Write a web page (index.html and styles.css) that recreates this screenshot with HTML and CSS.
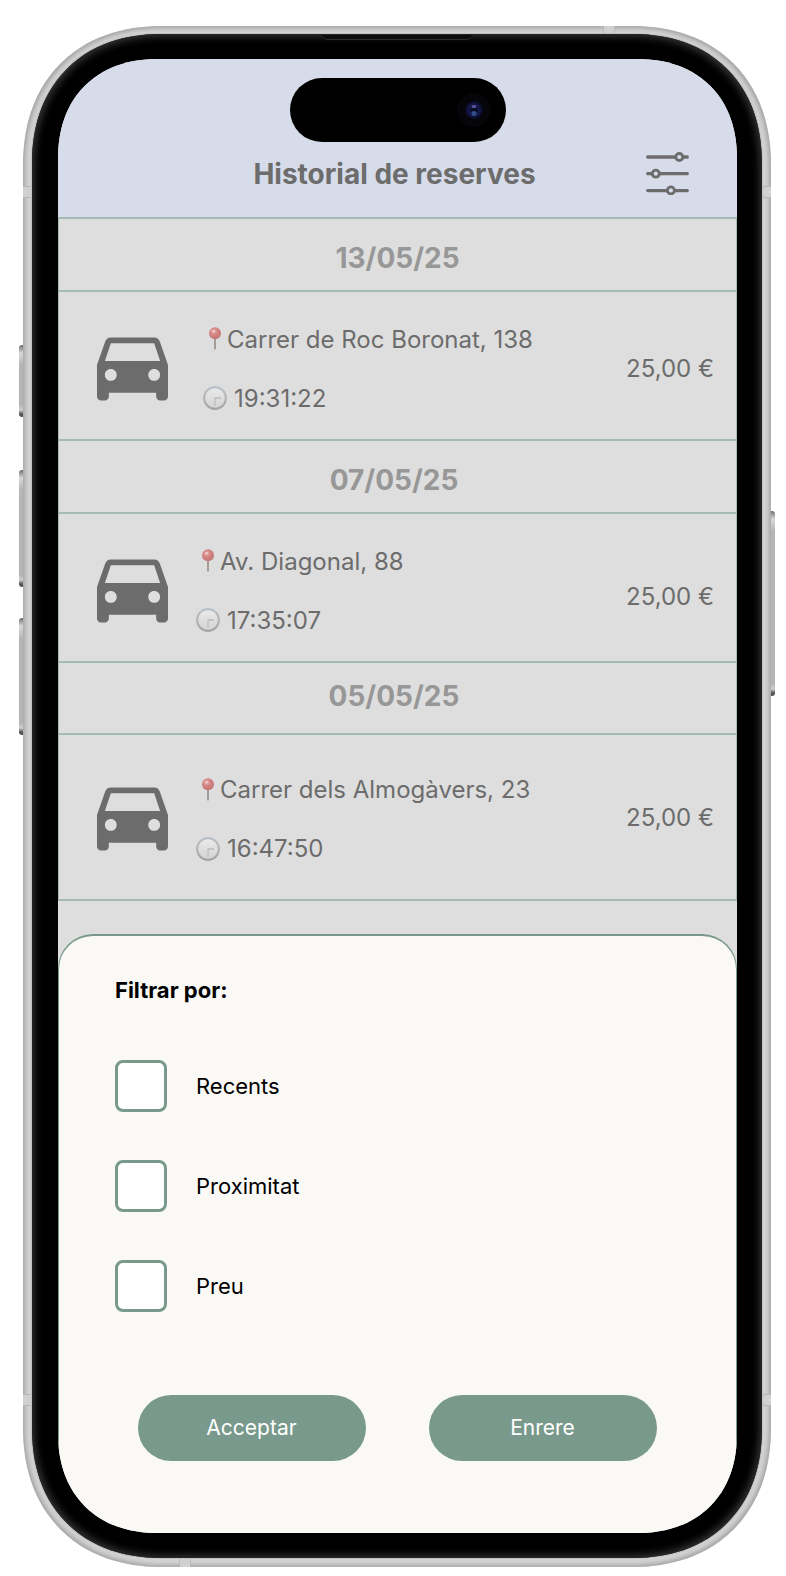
FILE: index.html
```html
<!DOCTYPE html>
<html lang="ca">
<head>
<meta charset="utf-8">
<meta name="viewport" content="width=device-width, initial-scale=1">
<title>Historial de reserves</title>
<link rel="stylesheet" href="styles.css">
</head>
<body>
<svg class="defs" aria-hidden="true">
  <defs>
    <radialGradient id="pin-head" cx="40%" cy="35%" r="65%">
      <stop offset="0" stop-color="#e3aaa8"/>
      <stop offset="0.5" stop-color="#d38482"/>
      <stop offset="1" stop-color="#c47674"/>
    </radialGradient>
    <linearGradient id="clock-rim" x1="0" y1="0" x2="0" y2="1">
      <stop offset="0" stop-color="#bcc3ca"/>
      <stop offset="0.5" stop-color="#b4b4b4"/>
      <stop offset="1" stop-color="#a2a2a2"/>
    </linearGradient>
    <linearGradient id="clock-face" x1="0" y1="0" x2="0" y2="1">
      <stop offset="0" stop-color="#e9e9e9"/>
      <stop offset="1" stop-color="#d4d4d4"/>
    </linearGradient>
    <symbol id="car" viewBox="3 5 18 16">
      <path d="M18.92 6.01C18.72 5.42 18.16 5 17.5 5h-11c-.66 0-1.21.42-1.42 1.01L3 12v8c0 .55.45 1 1 1h1c.55 0 1-.45 1-1v-1h12v1c0 .55.45 1 1 1h1c.55 0 1-.45 1-1v-8l-2.08-5.99zM6.5 16c-.83 0-1.5-.67-1.5-1.5S5.67 13 6.5 13s1.5.67 1.5 1.5S7.33 16 6.5 16zm11 0c-.83 0-1.5-.67-1.5-1.5s.67-1.5 1.5-1.5 1.5.67 1.5 1.5-.67 1.5-1.5 1.5zM5 11l1.5-4.5h11L19 11H5z" fill="currentColor"/>
    </symbol>
    <symbol id="pin" viewBox="0 0 24 24">
      <path d="M11 10h2v11.500l-1 1.500-1-1.500z" fill="#a39c97"/>
      <circle cx="12" cy="6.300" r="6" fill="url(#pin-head)"/>
      <ellipse cx="10.600" cy="4.300" rx="1.600" ry="1.200" fill="#ecc9c8"/>
    </symbol>
    <symbol id="clock" viewBox="0 0 24 24">
      <circle cx="12" cy="12" r="11.900" fill="url(#clock-rim)"/>
      <circle cx="12" cy="12" r="9.800" fill="url(#clock-face)"/>
      <path d="M12 19.500V12h6" fill="none" stroke="#bdbdbd" stroke-width="1.300"/>
    </symbol>
  </defs>
</svg>

<div class="phone">
  <span class="side side-action"></span>
  <span class="side side-up"></span>
  <span class="side side-down"></span>
  <span class="side side-power"></span>
  <span class="band band-tl"></span>
  <span class="band band-tr"></span>
  <span class="band band-bl"></span>
  <span class="band band-br"></span>
  <span class="band band-top"></span>
  <span class="band band-bottom"></span>
  <div class="bezel">
    <span class="speaker"></span>
    <div class="screen">
      <div class="island">
        <svg class="camera" viewBox="0 0 34 34" aria-hidden="true">
          <circle cx="17" cy="17" r="17" fill="#060509"/>
          <circle cx="17" cy="17" r="9" fill="#0c0d2b"/>
          <circle cx="17" cy="17" r="7" fill="#15174a"/>
          <ellipse cx="17" cy="17" rx="3.500" ry="6" fill="#0a0c24"/>
          <ellipse cx="17" cy="13.500" rx="2.600" ry="1.800" fill="#54509c"/>
          <ellipse cx="17" cy="20.500" rx="2.600" ry="2.400" fill="#2f4f8c"/>
        </svg>
      </div>

      <header class="header">
        <h1 class="title">Historial de reserves</h1>
        <button class="filter" type="button" aria-label="Filtrar">
          <svg viewBox="0 0 43 43" width="43" height="43" fill="none" stroke="currentColor" stroke-width="3.300" stroke-linecap="round" aria-hidden="true">
            <path d="M1.700 5H29.500M37.500 5h3.800M1.700 21.700h4M14 21.700h27.300M1.700 38.600H20.800M29 38.600h12.300"/>
            <circle cx="33.300" cy="5" r="3.500" stroke-width="2.800"/>
            <circle cx="9.800" cy="21.700" r="3.500" stroke-width="2.800"/>
            <circle cx="24.900" cy="38.400" r="3.500" stroke-width="2.800"/>
          </svg>
        </button>
      </header>

      <main class="history">
        <h2 class="day">13/05/25</h2>
        <article class="trip trip-latest">
          <svg class="car" aria-hidden="true"><use href="#car"/></svg>
          <div class="details">
            <p class="place"><svg class="mark" aria-hidden="true"><use href="#pin"/></svg>Carrer de Roc Boronat, 138</p>
            <p class="time"><svg class="mark" aria-hidden="true"><use href="#clock"/></svg>19:31:22</p>
          </div>
          <p class="price">25,00 €</p>
        </article>

        <h2 class="day day-past">07/05/25</h2>
        <article class="trip">
          <svg class="car" aria-hidden="true"><use href="#car"/></svg>
          <div class="details">
            <p class="place"><svg class="mark" aria-hidden="true"><use href="#pin"/></svg>Av. Diagonal, 88</p>
            <p class="time"><svg class="mark" aria-hidden="true"><use href="#clock"/></svg>17:35:07</p>
          </div>
          <p class="price">25,00 €</p>
        </article>

        <h2 class="day day-past day-last">05/05/25</h2>
        <article class="trip trip-last">
          <svg class="car" aria-hidden="true"><use href="#car"/></svg>
          <div class="details">
            <p class="place"><svg class="mark" aria-hidden="true"><use href="#pin"/></svg>Carrer dels Almogàvers, 23</p>
            <p class="time"><svg class="mark" aria-hidden="true"><use href="#clock"/></svg>16:47:50</p>
          </div>
          <p class="price">25,00 €</p>
        </article>
      </main>

      <form class="sheet">
        <fieldset class="options">
          <legend class="legend">Filtrar por:</legend>
          <label class="option"><input class="box" type="checkbox" name="recents">Recents</label>
          <label class="option"><input class="box" type="checkbox" name="proximitat">Proximitat</label>
          <label class="option"><input class="box" type="checkbox" name="preu">Preu</label>
        </fieldset>
        <div class="actions">
          <button class="action" type="button">Acceptar</button>
          <button class="action" type="button">Enrere</button>
        </div>
      </form>
    </div>
  </div>
</div>
</body>
</html>
```
FILE: styles.css
```css
* {
  box-sizing: border-box;
}

body {
  margin: 0;
  padding: 26px 15px 9px 23px;
  background: #fff;
  font-family: Inter, "Liberation Sans", sans-serif;
  color: #6c6c6c;
}

h1, h2, p {
  margin: 0;
}

.defs {
  position: absolute;
  width: 0;
  height: 0;
}

/* Device */
.phone {
  position: relative;
  padding: 8px 9px 9px;
  border-radius: 140px;
  corner-shape: superellipse(1.15);
  background: #d2d2d2;
  box-shadow: inset 0 0 4px 2px #a3a3a3;
}

.bezel {
  position: relative;
  padding: 25px 25px 25px 26px;
  border-radius: 130px;
  corner-shape: superellipse(1.15);
  background: #000;
  box-shadow: inset 0 0 7px 3px #303030, 0 0 0 1px #bfc2c0;
}

.screen {
  position: relative;
  overflow: hidden;
  border-radius: 100px;
  corner-shape: superellipse(1.15);
  background: #dedede;
}

.side {
  position: absolute;
  left: -4px;
  width: 4px;
  border-radius: 3px 0 0 3px;
  background: linear-gradient(#6c6c6c, #d9d9d9 8px, #b5b5b5 20px, #b5b5b5 calc(100% - 12px), #d0d0d0 calc(100% - 7px), #555 calc(100% - 3px));
}

.side-action {
  top: 319px;
  height: 72px;
}

.side-up {
  top: 444px;
  height: 117px;
}

.side-down {
  top: 592px;
  height: 117px;
}

.side-power {
  top: 485px;
  right: -4px;
  left: auto;
  height: 185px;
  border-radius: 0 3px 3px 0;
}

.band {
  position: absolute;
  width: 9px;
  height: 12px;
  border: solid #b9b9b9;
  border-width: 1px 0;
  background: #d0d0d0;
}

.band-tl {
  top: 160px;
  left: 0;
}

.band-tr {
  top: 160px;
  right: 0;
}

.band-bl {
  bottom: 161px;
  left: 0;
}

.band-br {
  bottom: 161px;
  right: 0;
}

.band-top,
.band-bottom {
  width: 12px;
  height: 8px;
  border-width: 0 1px;
}

.band-top {
  top: 0;
  right: 156px;
}

.band-bottom {
  bottom: 0;
  left: 156px;
}

.speaker {
  position: absolute;
  top: 1px;
  left: 50%;
  width: 150px;
  height: 5px;
  transform: translateX(-50%);
  border-bottom: 1px solid #2c2c2c;
  border-radius: 0 0 6px 6px;
  background: #0c0c0c;
}

.island {
  position: absolute;
  top: 19px;
  left: 50%;
  display: flex;
  align-items: center;
  justify-content: flex-end;
  width: 216px;
  height: 64px;
  padding-right: 15px;
  transform: translateX(-50%);
  border-radius: 32px;
  background: #000;
}

.camera {
  width: 34px;
  height: 34px;
}

/* Header */
.header {
  display: grid;
  grid-template-columns: 1fr auto 1fr;
  align-items: center;
  height: 158px;
  padding: 71px 48px 0 42px;
  background: #d6dcea;
}

.title {
  grid-column: 2;
  font-size: 28px;
  font-weight: 700;
  line-height: 34px;
}

.filter {
  justify-self: end;
  display: flex;
  padding: 0;
  border: 0;
  background: none;
  color: #6c6c6c;
}

/* History */
.history {
  border: solid #a5bab2;
  border-width: 2px 1px 0;
}

.day {
  padding: 22px 0 15px;
  border-bottom: 2px solid #a5bab2;
  color: #979797;
  font-size: 28px;
  font-weight: 700;
  line-height: 34px;
  text-align: center;
}

.day-past {
  padding-right: 7px;
}

.day-last {
  padding-top: 16px;
  padding-bottom: 20px;
}

.trip {
  display: flex;
  align-items: center;
  gap: 28px;
  min-height: 149px;
  padding: 6px 22px 0 38px;
  border-bottom: 2px solid #a5bab2;
  font-size: 24px;
  line-height: 29px;
}

.trip-latest {
  gap: 35px;
}

.trip-last {
  min-height: 166px;
  padding-top: 4px;
}

.car {
  flex: none;
  width: 71px;
  height: 64px;
}

.details {
  display: grid;
  flex: 1;
  gap: 30px;
}

.place,
.time {
  display: flex;
  align-items: center;
}

.time {
  gap: 7px;
}

.mark {
  flex: none;
  width: 24px;
  height: 24px;
}

.price {
  align-self: flex-start;
  padding-top: 62px;
  white-space: nowrap;
}

.trip-latest .price {
  padding-top: 56px;
}

.trip-last .price {
  padding-top: 64px;
}

/* Filter sheet */
.sheet {
  margin-top: 33px;
  padding: 40px 57px 72px 56px;
  border: solid #78998b;
  border-width: 2px 1px 0;
  border-radius: 35px 35px 0 0;
  background: #faf9f6;
  color: #000;
  font-size: 22px;
  line-height: 28px;
}

.options {
  display: grid;
  gap: 48px;
  margin: 0;
  padding: 0;
  border: 0;
}

.legend {
  margin-bottom: 56px;
  padding: 0;
  font-weight: 700;
}

.option {
  display: flex;
  align-items: center;
  gap: 29px;
}

.box {
  flex: none;
  width: 52px;
  height: 52px;
  margin: 0;
  appearance: none;
  border: 3px solid #78998b;
  border-radius: 8px;
  background: #fff;
}

.box:checked {
  background: #78998b;
}

.actions {
  display: flex;
  justify-content: center;
  gap: 63px;
  margin-top: 83px;
}

.action {
  flex: 0 1 228px;
  height: 66px;
  padding: 0;
  border: 0;
  border-radius: 33px;
  background: #78998b;
  color: #fff;
  font-family: inherit;
  font-size: 21px;
  line-height: 24px;
}
```
